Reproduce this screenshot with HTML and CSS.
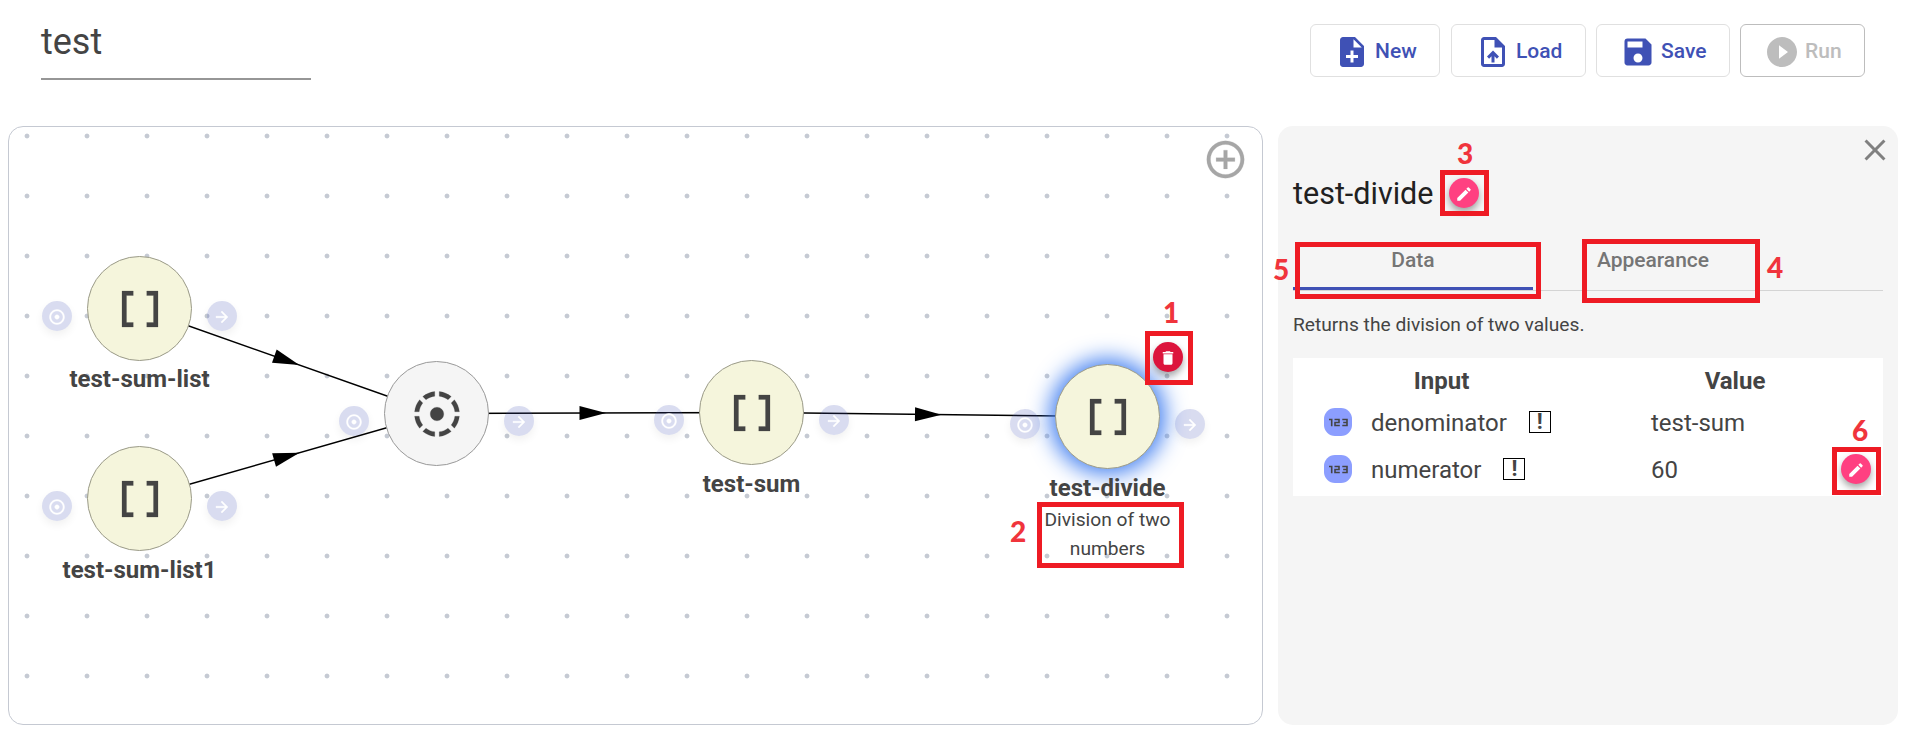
FILE: index.html
```html
<!DOCTYPE html>
<html lang="en">
<head>
<meta charset="utf-8">
<title>test</title>
<link rel="stylesheet" href="styles.css">
</head>
<body>
<svg class="defs" aria-hidden="true">
  <symbol id="array" viewBox="0 0 24 24"><path d="M15 4v2h3v12h-3v2h5V4zM4 20h5v-2H6V6h3V4H4z"/></symbol>
  <symbol id="target" viewBox="0 0 24 24"><path d="M12 2C6.49 2 2 6.49 2 12s4.49 10 10 10 10-4.49 10-10S17.51 2 12 2zm0 18c-4.41 0-8-3.59-8-8s3.59-8 8-8 8 3.59 8 8-3.59 8-8 8zm3-8c0 1.66-1.34 3-3 3s-3-1.34-3-3 1.34-3 3-3 3 1.34 3 3z"/></symbol>
  <symbol id="arrow" viewBox="0 0 24 24"><path d="M12 4l-1.41 1.41L16.17 11H4v2h12.17l-5.58 5.59L12 20l8-8z"/></symbol>
  <symbol id="pencil" viewBox="0 0 24 24"><path d="M3 17.25V21h3.75L17.81 9.94l-3.75-3.75L3 17.25zM20.71 7.04a1 1 0 0 0 0-1.41l-2.34-2.34a1 1 0 0 0-1.41 0l-1.83 1.83 3.75 3.75 1.83-1.83z"/></symbol>
</svg>

<header class="topbar">
  <div class="flow-name">test</div>
  <nav class="actions">
    <button class="btn btn-new"><svg viewBox="0 0 24 24"><path d="M14 2H6c-1.1 0-1.99.9-1.99 2L4 20c0 1.1.89 2 1.99 2H18c1.1 0 2-.9 2-2V8l-6-6zm2 14h-3v3h-2v-3H8v-2h3v-3h2v3h3v2zm-3-7V3.5L18.500 9H13z"/></svg>New</button>
    <button class="btn btn-load"><svg viewBox="0 0 24 24"><path d="M14 2H6c-1.1 0-1.99.9-1.99 2L4 20c0 1.100.89 2 1.990 2H18c1.100 0 2-.9 2-2V8l-6-6zm4 18H6V4h7v5h5v11zM8 15.010l1.410 1.410L11 14.840V19h2v-4.160l1.590 1.590L16 15.010 12.010 11z"/></svg>Load</button>
    <button class="btn btn-save"><svg viewBox="0 0 24 24"><path d="M17 3H5a2 2 0 0 0-2 2v14c0 1.100.89 2 2 2h14c1.100 0 2-.9 2-2V7l-4-4zm-5 16c-1.660 0-3-1.340-3-3s1.340-3 3-3 3 1.340 3 3-1.340 3-3 3zm3-10H5V5h10v4z"/></svg>Save</button>
    <button class="btn btn-run" disabled><svg viewBox="0 0 24 24"><path d="M12 2C6.480 2 2 6.480 2 12s4.480 10 10 10 10-4.480 10-10S17.520 2 12 2zm-2 14.500v-9l6 4.500-6 4.500z"/></svg>Run</button>
  </nav>
</header>

<main class="workspace">
  <section class="canvas">
    <svg class="links" width="1254" height="598" viewBox="9 127 1254 598">
      <path d="M139.500 308.500L436.500 413.500M139.500 498.500L436.500 413.500M436.500 413.500L751.500 412.500M751.500 412.500L1107.500 416.500"/>
      <polygon points="-14.500,-7 12,0 -14.500,7" transform="translate(288 361) rotate(19.470)"/>
      <polygon points="-14.500,-7 12,0 -14.500,7" transform="translate(288 456) rotate(-15.970)"/>
      <polygon points="-14.500,-7 12,0 -14.500,7" transform="translate(594 413) rotate(-.2)"/>
      <polygon points="-14.500,-7 12,0 -14.500,7" transform="translate(929.500 414.500) rotate(.6)"/>
    </svg>

    <div class="node n-list">
      <span class="port in"><svg><use href="#target"/></svg></span>
      <span class="disc"><svg><use href="#array"/></svg></span>
      <span class="port out"><svg><use href="#arrow"/></svg></span>
      <div class="label">test-sum-list</div>
    </div>
    <div class="node n-list1">
      <span class="port in"><svg><use href="#target"/></svg></span>
      <span class="disc"><svg><use href="#array"/></svg></span>
      <span class="port out"><svg><use href="#arrow"/></svg></span>
      <div class="label">test-sum-list1</div>
    </div>
    <div class="node n-join">
      <span class="port in"><svg><use href="#target"/></svg></span>
      <span class="disc plain"><svg viewBox="0 0 24 24"><path d="M11 4.070V2.050c-2.010.2-3.840 1-5.320 2.210L7.100 5.690c1.110-.86 2.440-1.440 3.900-1.620zm7.320.19C16.840 3.050 15.010 2.250 13 2.050v2.020c1.460.18 2.790.76 3.900 1.620l1.420-1.430zM19.930 11h2.020c-.2-2.010-1-3.840-2.210-5.320L18.310 7.100c.86 1.110 1.440 2.440 1.620 3.900zM5.690 7.100L4.260 5.680C3.050 7.160 2.250 8.990 2.050 11h2.020c.18-1.460.76-2.790 1.620-3.900zM4.070 13H2.050c.2 2.010 1 3.840 2.210 5.320l1.430-1.430c-.86-1.100-1.440-2.430-1.620-3.890zM15 12c0-1.660-1.340-3-3-3s-3 1.340-3 3 1.340 3 3 3 3-1.340 3-3zm3.310 4.900l1.430 1.430c1.210-1.480 2.010-3.320 2.210-5.320h-2.020c-.18 1.450-.76 2.780-1.620 3.890zM13 19.930v2.020c2.010-.2 3.840-1 5.320-2.210l-1.430-1.430c-1.100.86-2.430 1.440-3.890 1.620zm-7.320-.19C7.160 20.950 9 21.750 11 21.950v-2.020c-1.460-.18-2.790-.76-3.900-1.620l-1.420 1.430z"/></svg></span>
      <span class="port out"><svg><use href="#arrow"/></svg></span>
    </div>
    <div class="node n-sum">
      <span class="port in"><svg><use href="#target"/></svg></span>
      <span class="disc"><svg><use href="#array"/></svg></span>
      <span class="port out"><svg><use href="#arrow"/></svg></span>
      <div class="label">test-sum</div>
    </div>
    <div class="node n-divide">
      <span class="port in"><svg><use href="#target"/></svg></span>
      <span class="disc selected"><svg><use href="#array"/></svg></span>
      <span class="port out"><svg><use href="#arrow"/></svg></span>
      <span class="fab delete"><svg viewBox="0 0 24 24"><path d="M6 19c0 1.100.9 2 2 2h8c1.100 0 2-.9 2-2V7H6v12zM19 4h-3.500l-1-1h-5l-1 1H5v2h14V4z"/></svg></span>
      <div class="label">test-divide</div>
      <div class="desc">Division of two numbers</div>
    </div>

    <svg class="add" viewBox="0 0 24 24"><path d="M13 7h-2v4H7v2h4v4h2v-4h4v-2h-4V7zm-1-5C6.490 2 2 6.490 2 12s4.490 10 10 10 10-4.490 10-10S17.510 2 12 2zm0 18c-4.410 0-8-3.590-8-8s3.590-8 8-8 8 3.590 8 8-3.590 8-8 8z"/></svg>
  </section>

  <aside class="panel">
    <svg class="close" viewBox="0 0 24 24"><path d="M19 6.410L17.590 5 12 10.590 6.410 5 5 6.410 10.590 12 5 17.590 6.410 19 12 13.410 17.590 19 19 17.590 13.410 12z"/></svg>
    <h1 class="title">test-divide <span class="fab"><svg><use href="#pencil"/></svg></span></h1>
    <div class="tabs"><span class="tab active">Data</span><span class="tab">Appearance</span></div>
    <p class="summary">Returns the division of two values.</p>
    <div class="inputs">
      <div class="row head"><span class="h-input">Input</span><span class="h-value">Value</span></div>
      <div class="row">
        <svg class="num" viewBox="0 0 28 28"><path d="M5 11.500h2.700v6.800M10.500 11.500h4.500v3h-4v3h4.800M18.300 11.500h4.700v6h-4.700M19.200 14.500h4"/></svg>
        <span class="key"><span class="txt">denominator</span> <b class="req">!</b></span><span class="val txt">test-sum</span>
      </div>
      <div class="row">
        <svg class="num" viewBox="0 0 28 28"><path d="M5 11.500h2.700v6.800M10.500 11.500h4.500v3h-4v3h4.800M18.300 11.500h4.700v6h-4.700M19.200 14.500h4"/></svg>
        <span class="key"><span class="txt">numerator</span> <b class="req">!</b></span><span class="val txt">60</span>
        <span class="fab"><svg><use href="#pencil"/></svg></span>
      </div>
    </div>
  </aside>
</main>

<div class="callout c1"></div><div class="mark m1">1</div>
<div class="callout c2"></div><div class="mark m2">2</div>
<div class="callout c3"></div><div class="mark m3">3</div>
<div class="callout c4"></div><div class="mark m4">4</div>
<div class="callout c5"></div><div class="mark m5">5</div>
<div class="callout c6"></div><div class="mark m6">6</div>
</body>
</html>
```
FILE: styles.css
```css
* { box-sizing: border-box; }
body {
  margin: 0;
  height: 736px;
  overflow: hidden;
  position: relative;
  background: #fff;
  color: #444;
  font-family: Roboto, sans-serif;
}
.defs { position: absolute; width: 0; height: 0; }
svg { fill: currentColor; display: block; flex: none; }

/* Top bar */
.topbar { display: flex; justify-content: space-between; height: 126px; padding: 24px 47px 0 41px; }
.flow-name {
  width: 270px;
  height: 56px;
  padding-top: 1px;
  border-bottom: 2px solid #969696;
  font-size: 36px;
  line-height: 35px;
}
.actions { display: flex; gap: 10px; }
.btn {
  display: flex;
  align-items: center;
  height: 53px;
  padding: 1px 0 0 23px;
  border: 1px solid #e0e0e0;
  border-radius: 6px;
  background: #fff;
  color: #3f51b5;
  font: 500 21px/50px Roboto, sans-serif;
}
.btn svg { width: 36px; height: 36px; margin: 2px 5px 0 0; }
.btn-new { width: 130px; margin-right: 1px; }
.btn-load { width: 135px; }
.btn-save { width: 134px; }
.btn-run { width: 125px; border-color: #bdbdbd; color: #bdbdbd; }

/* Workspace */
.workspace { display: flex; gap: 15px; padding-left: 8px; }
.canvas {
  position: relative;
  width: 1255px;
  height: 599px;
  border: 1px solid #c5c9d2;
  border-radius: 15px;
  background: radial-gradient(circle at 30px 30px, #c5cad3 2px, transparent 2.800px) -12px -21px / 60px 60px;
}
.links { position: absolute; left: 0; top: 0; fill: #000; }
.links path { fill: none; stroke: #000; stroke-width: 1.500; }
.node { position: absolute; width: 105px; height: 105px; }
.n-list { left: 78px; top: 129px; }
.n-list1 { left: 78px; top: 319px; }
.n-join { left: 375px; top: 234px; }
.n-sum { left: 690px; top: 233px; }
.n-divide { left: 1046px; top: 237px; }
.disc {
  position: absolute;
  inset: 0;
  display: flex;
  align-items: center;
  justify-content: center;
  border: 1px solid #9a9a88;
  border-radius: 50%;
  background: #f5f5dc;
}
.disc.plain { background: #f5f5f5; border-color: #999; }
.disc.selected { box-shadow: 0 0 22px 5px #3f7df0; }
.disc svg { width: 54px; height: 54px; margin-left: 1px; stroke: currentColor; stroke-width: .1; }
.port {
  position: absolute;
  top: 45px;
  display: flex;
  align-items: center;
  justify-content: center;
  width: 30px;
  height: 30px;
  padding-top: 2px;
  border-radius: 50%;
  background: rgba(63, 81, 181, .2);
  box-shadow: 0 4px 8px rgba(0, 0, 0, .06);
  color: #fff;
}
.port.in { left: -45px; }
.port.out { left: 120px; }
.port svg { width: 18px; height: 18px; stroke: currentColor; stroke-width: .5; }
.label {
  position: absolute;
  top: 110px;
  left: -60px;
  width: 225px;
  text-align: center;
  font-weight: 700;
  font-size: 24px;
  line-height: 28px;
}
.n-list .label { top: 109px; }
.desc {
  position: absolute;
  top: 141px;
  left: -20px;
  width: 145px;
  text-align: center;
  font-size: 19.200px;
  line-height: 29px;
}
.fab {
  display: flex;
  align-items: center;
  justify-content: center;
  flex: none;
  width: 30px;
  height: 30px;
  border-radius: 50%;
  background: #ff4081;
  color: #fff;
  box-shadow: 0 4px 7px rgba(0, 0, 0, .35);
}
.fab svg { width: 18px; height: 18px; margin-top: 2px; }
.fab.delete { position: absolute; left: 98px; top: -22px; background: #dc143c; }
.add { position: absolute; left: 1194px; top: 10px; width: 45px; height: 45px; color: #a6a6a6; }
.add path { stroke: currentColor; stroke-width: .1; }

/* Details panel */
.panel {
  position: relative;
  width: 620px;
  height: 599px;
  padding: 47px 15px 0;
  border-radius: 15px;
  background: #f5f5f5;
}
.close { position: absolute; right: 5px; top: 6px; width: 36px; height: 36px; color: #808080; }
.title {
  display: flex;
  align-items: center;
  gap: 16px;
  height: 40px;
  margin: 0;
  color: #212121;
  font-weight: 400;
  font-size: 30.500px;
}
.tabs { display: flex; height: 78px; padding-top: 24px; border-bottom: 1px solid #d4d4d4; }
.tab {
  width: 240px;
  height: 53px;
  padding-top: 11px;
  text-align: center;
  color: #757575;
  font-weight: 500;
  font-size: 21px;
  line-height: 24px;
}
.tab.active { border-bottom: 3px solid #3f51b5; }
.summary { margin: 22px 0 0; height: 45px; font-size: 19.200px; line-height: 24px; }
.inputs { height: 138px; background: #fff; font-size: 24px; }
.row { display: flex; align-items: center; height: 46px; padding-left: 31px; }
.row.head { height: 41px; padding: 4px 0 0; font-weight: 700; }
.row + .row + .row { height: 47px; }
.h-input { width: 297px; text-align: center; }
.h-value { width: 290px; text-align: center; }
.num { width: 28px; height: 28px; border-radius: 11px; background: #8c9eff; }
.num path { fill: none; stroke: #444; stroke-width: 1.600; }
.key { display: flex; align-items: center; gap: 22px; width: 299px; padding-left: 19px; }
.txt { padding-top: 2px; }
.val { width: 175px; }
.req {
  width: 22px;
  height: 22px;
  border: 1px solid #000;
  text-align: center;
  font-size: 22px;
  line-height: 20px;
}
.row .fab { margin: 1px 0 0 15px; }

/* Numbered callouts */
.callout { position: absolute; border: 5px solid #ee1b24; }
.c1 { left: 1145px; top: 331px; width: 48px; height: 54px; }
.c2 { left: 1037px; top: 502px; width: 147px; height: 66px; }
.c3 { left: 1440px; top: 170px; width: 49px; height: 46px; }
.c4 { left: 1582px; top: 239px; width: 178px; height: 64px; }
.c5 { left: 1295px; top: 242px; width: 246px; height: 57px; }
.c6 { left: 1832px; top: 447px; width: 49px; height: 48px; }
.mark {
  position: absolute;
  width: 20px;
  color: #f0343c;
  text-align: center;
  font: 900 28px/30px Lato, "Open Sans", sans-serif;
}
.m1 { left: 1161px; top: 297px; }
.m2 { left: 1008px; top: 516px; }
.m3 { left: 1455px; top: 138px; }
.m4 { left: 1765px; top: 252px; }
.m5 { left: 1271px; top: 254px; }
.m6 { left: 1850px; top: 415px; }
```
